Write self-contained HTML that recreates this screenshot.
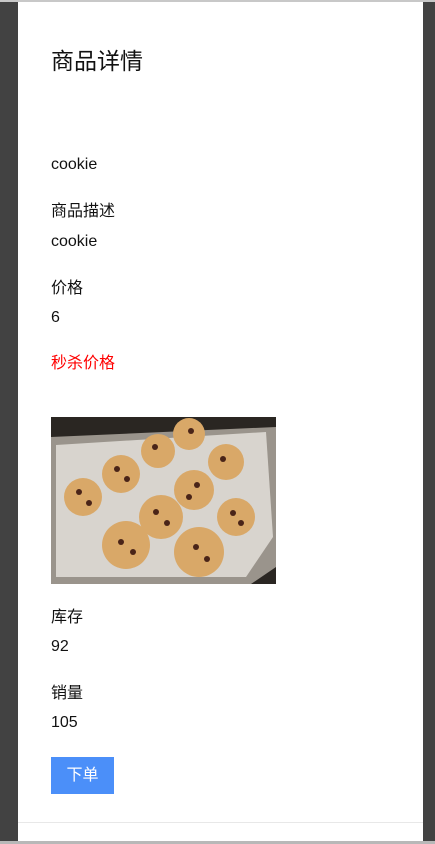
<!DOCTYPE html>
<html><head><meta charset="utf-8"><style>
html,body{margin:0;padding:0;width:435px;height:844px;overflow:hidden;background:#424242;font-family:"Liberation Sans","Noto Sans CJK SC",sans-serif;}
.top{position:absolute;left:0;top:0;width:435px;height:2px;background:#c8c8c8}
.bot{position:absolute;left:0;top:841px;width:435px;height:3px;background:#b8b8b8}
.panel{position:absolute;left:18px;top:2px;width:405px;height:839px;background:#fff}
.line{position:absolute;left:18px;top:822px;width:405px;height:1px;background:#e8e8e8}
.t{position:absolute;left:51px;font-size:16px;color:#111;line-height:20px;white-space:nowrap}
h1{position:absolute;left:51px;top:46px;margin:0;font-size:23px;font-weight:normal;color:#111;line-height:30px}
.btn{position:absolute;left:51px;top:757px;width:63px;height:37px;background:#4b8ff9;color:#fff;font-size:16px;line-height:37px;text-align:center}
svg{position:absolute;left:51px;top:417px}
</style></head><body>
<div class="top"></div>
<div class="panel"></div>
<div class="line"></div>
<div class="bot"></div>
<h1>商品详情</h1>
<div class="t" style="top:155px">cookie</div>
<div class="t" style="top:202px">商品描述</div>
<div class="t" style="top:232px">cookie</div>
<div class="t" style="top:279px">价格</div>
<div class="t" style="top:308px">6</div>
<div class="t" style="top:354px;color:#f00">秒杀价格</div>
<svg width="225" height="167" viewBox="0 0 225 167">
<rect width="225" height="167" fill="#2a2622"/>
<polygon points="0,20 225,10 225,150 200,167 0,167" fill="#9a948c"/>
<polygon points="5,28 215,15 222,120 195,160 5,160" fill="#d8d4ce"/>
<g fill="#d9a868">
<circle cx="32" cy="80" r="19"/><circle cx="70" cy="57" r="19"/><circle cx="107" cy="34" r="17"/><circle cx="138" cy="17" r="16"/>
<circle cx="175" cy="45" r="18"/><circle cx="143" cy="73" r="20"/><circle cx="110" cy="100" r="22"/><circle cx="75" cy="128" r="24"/>
<circle cx="148" cy="135" r="25"/><circle cx="185" cy="100" r="19"/>
</g>
<g fill="#4a2418">
<circle cx="28" cy="75" r="3"/><circle cx="38" cy="86" r="3"/><circle cx="66" cy="52" r="3"/><circle cx="76" cy="62" r="3"/><circle cx="104" cy="30" r="3"/><circle cx="140" cy="14" r="3"/><circle cx="172" cy="42" r="3"/><circle cx="146" cy="68" r="3"/><circle cx="138" cy="80" r="3"/><circle cx="105" cy="95" r="3"/><circle cx="116" cy="106" r="3"/><circle cx="70" cy="125" r="3"/><circle cx="82" cy="135" r="3"/><circle cx="145" cy="130" r="3"/><circle cx="156" cy="142" r="3"/><circle cx="182" cy="96" r="3"/><circle cx="190" cy="106" r="3"/>
</g>
</svg>
<div class="t" style="top:608px">库存</div>
<div class="t" style="top:637px">92</div>
<div class="t" style="top:684px">销量</div>
<div class="t" style="top:713px">105</div>
<div class="btn">下单</div>
</body></html>
